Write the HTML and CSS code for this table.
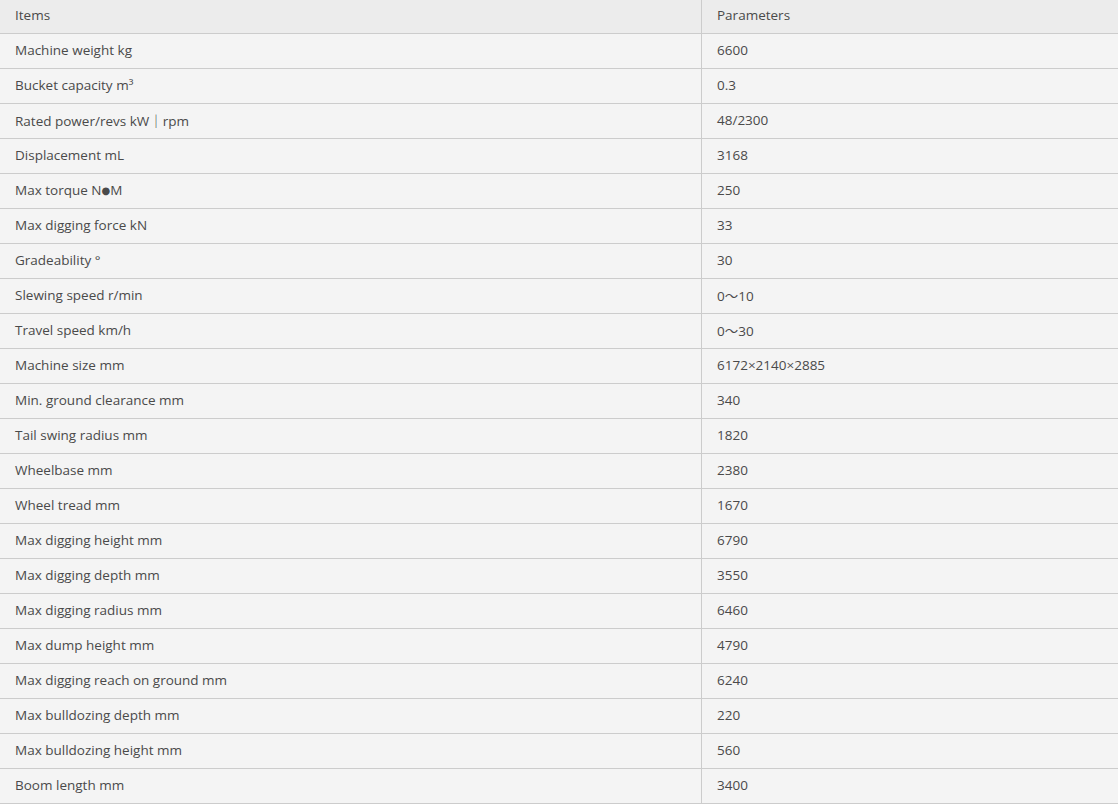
FILE: index.html
```html
<!DOCTYPE html>
<html>
<head>
<meta charset="utf-8">
<link rel="stylesheet" href="styles.css">
</head>
<body>
<table class="spec">
<thead>
<tr><th class="c-item">Items</th><th class="c-val">Parameters</th></tr>
</thead>
<tbody>
<tr><td class="c-item">Machine weight kg</td><td class="c-val">6600</td></tr>
<tr><td class="c-item">Bucket capacity m³</td><td class="c-val">0.3</td></tr>
<tr><td class="c-item">Rated power/revs kW｜rpm</td><td class="c-val">48/2300</td></tr>
<tr><td class="c-item">Displacement mL</td><td class="c-val">3168</td></tr>
<tr><td class="c-item">Max torque N<span class="dot">●</span>M</td><td class="c-val">250</td></tr>
<tr><td class="c-item">Max digging force kN</td><td class="c-val">33</td></tr>
<tr><td class="c-item">Gradeability °</td><td class="c-val">30</td></tr>
<tr><td class="c-item">Slewing speed r/min</td><td class="c-val">0～10</td></tr>
<tr><td class="c-item">Travel speed km/h</td><td class="c-val">0～30</td></tr>
<tr><td class="c-item">Machine size mm</td><td class="c-val">6172×2140×2885</td></tr>
<tr><td class="c-item">Min. ground clearance mm</td><td class="c-val">340</td></tr>
<tr><td class="c-item">Tail swing radius mm</td><td class="c-val">1820</td></tr>
<tr><td class="c-item">Wheelbase mm</td><td class="c-val">2380</td></tr>
<tr><td class="c-item">Wheel tread mm</td><td class="c-val">1670</td></tr>
<tr><td class="c-item">Max digging height mm</td><td class="c-val">6790</td></tr>
<tr><td class="c-item">Max digging depth mm</td><td class="c-val">3550</td></tr>
<tr><td class="c-item">Max digging radius mm</td><td class="c-val">6460</td></tr>
<tr><td class="c-item">Max dump height mm</td><td class="c-val">4790</td></tr>
<tr><td class="c-item">Max digging reach on ground mm</td><td class="c-val">6240</td></tr>
<tr><td class="c-item">Max bulldozing depth mm</td><td class="c-val">220</td></tr>
<tr><td class="c-item">Max bulldozing height mm</td><td class="c-val">560</td></tr>
<tr><td class="c-item">Boom length mm</td><td class="c-val">3400</td></tr>
</tbody>
</table>
</body>
</html>
```
FILE: styles.css
```css
html, body {
  margin: 0;
  padding: 0;
  background: #f4f4f4;
}
.spec {
  width: 1118px;
  border-collapse: collapse;
  table-layout: fixed;
  font-family: "Open Sans", "Noto Sans CJK SC", sans-serif;
  font-size: 13.5px;
  color: #4a4a4a;
}
.spec th, .spec td {
  text-align: left;
  font-weight: normal;
  padding: 0 15px 3px;
  border-bottom: 1px solid #cccccc;
  white-space: nowrap;
}
.spec th {
  height: 30px;
  background: #ececec;
}
.spec td {
  height: 31px;
  background: #f4f4f4;
}
.spec .c-item {
  width: 671px;
  border-right: 1px solid #cccccc;
}
.dot {
  font-family: "DejaVu Sans", sans-serif;
  font-size: 10px;
  vertical-align: 1px;
}
```
